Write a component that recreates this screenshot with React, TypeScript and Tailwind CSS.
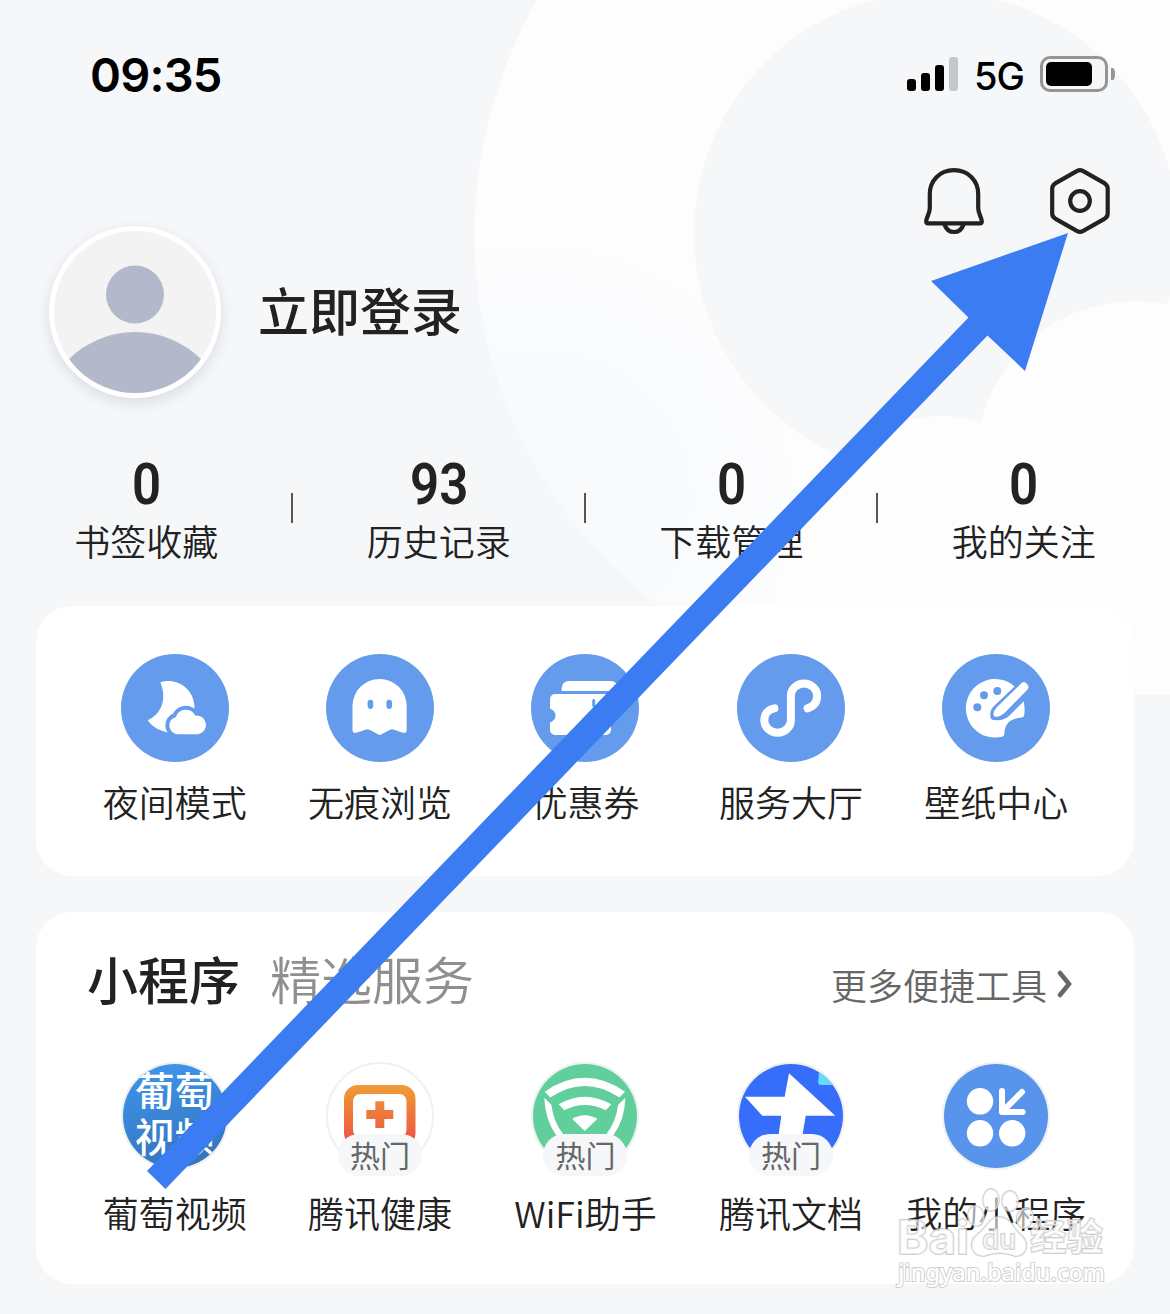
import React from 'react';

const stats = [
  { value: '0', label: '书签收藏' },
  { value: '93', label: '历史记录' },
  { value: '0', label: '下载管理' },
  { value: '0', label: '我的关注' },
];

const NightIcon = () => (
  <svg viewBox="0 0 108 108" className="size-[108px]">
    <path
      d="M39.300 28.200C55 23.500 73.500 34 73.500 54C73.500 66 60 82 44.500 78C37 76 30.500 72 26.700 66.300C40 60 46.500 46 39.300 28.200Z"
      fill="#fff"
    />
    <path
      d="M56.500 80.200a8.800 8.800 0 0 1-1.600-17.300a10.500 10.500 0 0 1 19.500-1.200a9.300 9.300 0 1 1 2.600 18.500z"
      fill="#fff"
      stroke="#649bec"
      strokeWidth="8"
    />
    <path
      d="M56.500 80.200a8.800 8.800 0 0 1-1.600-17.300a10.500 10.500 0 0 1 19.500-1.200a9.300 9.300 0 1 1 2.600 18.500z"
      fill="#fff"
    />
  </svg>
);

const GhostIcon = () => (
  <svg viewBox="0 0 108 108" className="size-[108px]">
    <path
      d="M26.500 52a27.100 27.100 0 0 1 54.200 0V76q0 3.500-4 2.700L67.500 75.500Q65.500 74.800 63.500 76L55.500 80.300Q53.700 81.500 52 80.300L44 76Q42 74.800 40 75.500L30.500 78.700Q26.500 79.500 26.500 76z"
      fill="#fff"
    />
    <rect x="41.600" y="45.700" width="5.600" height="9.200" rx="2.800" fill="#649bec" />
    <rect x="60.400" y="45.700" width="5.600" height="9.200" rx="2.800" fill="#649bec" />
  </svg>
);

const CouponIcon = () => (
  <svg viewBox="0 0 108 108" className="size-[108px]">
    <path d="M30.700 37V34a7 7 0 0 1 7-7H80a7 7 0 0 1 7 7v3z" fill="#fff" />
    <path
      d="M24 40H83a5 5 0 0 1 5 5v9.500a7 7 0 0 0-8 6.500V76a5 5 0 0 1-5 5H24a5 5 0 0 1-5-5V68.500q5.500-2.500 5.500-7T19 54.500V45a5 5 0 0 1 5-5z"
      fill="#fff"
    />
    <path d="M62.700 46.500v4.500q0 2 3 1.500" fill="none" stroke="#649bec" strokeWidth="3" strokeLinecap="round" />
  </svg>
);

const ServiceIcon = () => (
  <svg viewBox="0 0 108 108" className="size-[108px]">
    <path
      d="M37.400 54.400C31 55.500 27.300 60 27.300 66.200a13.300 12.500 0 0 0 26.600 0V42a13.100 12.500 0 0 1 26.200 0C80.100 48 76.500 52.500 70.500 54.400"
      fill="none"
      stroke="#fff"
      strokeWidth="8"
      strokeLinecap="round"
    />
  </svg>
);

const PaletteIcon = () => (
  <svg viewBox="0 0 108 108" className="size-[108px]">
    <path
      d="M80.500 43.500C82.500 49 83 55 82.300 60.500Q81.800 63.800 78.500 63.800C69 64 62.600 70 62.500 78.500Q62.600 82 60 82.800A29.300 29.300 0 1 1 71.500 31.500z"
      fill="#fff"
    />
    <circle cx="35.300" cy="53.300" r="4" fill="#649bec" />
    <circle cx="42" cy="41.300" r="4" fill="#649bec" />
    <circle cx="55.300" cy="37" r="4" fill="#649bec" />
    <path d="M79 26.500L91 38L67 62Q62 67 52 66Q48 66 48.300 61Q48 56 52 52z" fill="#649bec" />
    <path
      d="M79.500 29Q82 27 84.500 29.500L85.700 30.800Q87.500 33.500 85.300 35.700L63.500 58Q58 63.500 53.500 62.700Q51.200 62.700 51.500 60Q51.500 56.500 55 53z"
      fill="#fff"
    />
  </svg>
);

const GrapeIcon = () => (
  <div className="size-full bg-linear-165 from-[#4096ee] to-[#3172b8] pt-[2px] pl-[12px] text-[40px] leading-[46px] font-medium whitespace-nowrap text-white">
    <div>葡萄</div>
    <div>视频</div>
  </div>
);

const HealthIcon = () => (
  <svg viewBox="0 0 104 104" className="size-full">
    <defs>
      <linearGradient id="health" x1="0" y1="21" x2="0" y2="76" gradientUnits="userSpaceOnUse">
        <stop offset="0" stopColor="#f09c36" />
        <stop offset="1" stopColor="#ec5642" />
      </linearGradient>
    </defs>
    <path
      fillRule="evenodd"
      d="M30 21H73.500a14 14 0 0 1 14 14V69a14 14 0 0 1-14 14H30a14 14 0 0 1-14-14V35a14 14 0 0 1 14-14zM32 30a7 7 0 0 0-7 7V66a7 7 0 0 0 7 7H71.500a7 7 0 0 0 7-7V37a7 7 0 0 0-7-7z"
      fill="url(#health)"
    />
    <path d="M47.300 37.300h9V46h9v9h-9v9h-9v-9h-9v-9h9z" fill="url(#health)" />
  </svg>
);

const WifiIcon = () => (
  <svg viewBox="0 0 104 104" className="size-full bg-[#60cf9b]" fill="#fff">
    <path d="M11.700 27.700Q51.700 0 92 27.700L86.500 33.500Q51.700 10.500 17.300 33.500z" />
    <path d="M25.700 40.300Q51.700 25 78.300 40.300L72.700 46.300Q51.700 35.500 31.300 46.300z" />
    <path d="M39.300 55Q51.700 47.500 64.300 55L51.700 67z" />
    <path d="M11.300 33.700L18.500 41Q20 57 31 71.500L52 90L72.500 71.500Q83.500 57 85 41L92.300 33.700Q92 55 80.500 71L52 98L23 71Q12 55 11.300 33.700z" />
  </svg>
);

const DocsIcon = () => (
  <svg viewBox="0 0 104 104" className="size-full bg-[#366dfb]">
    <path d="M80.500 0H104V21H82Q79 21 79.200 18z" fill="#65dafc" />
    <path
      d="M50 9.300L96.300 51.700H66.700L63.300 72L61 84H38L39.700 70.300L42.300 51.700H23.300L6 32.700H45.700z"
      fill="#fff"
    />
  </svg>
);

const MineIcon = () => (
  <svg viewBox="0 0 104 104" className="size-full bg-[#5894eb]" fill="#fff">
    <circle cx="36" cy="37.300" r="13.200" />
    <circle cx="36" cy="69.300" r="13.200" />
    <circle cx="68.200" cy="69.300" r="13.200" />
    <path
      d="M58 27v21h20.500M78 28L59 47"
      fill="none"
      stroke="#fff"
      strokeWidth="6"
      strokeLinecap="round"
      strokeLinejoin="round"
    />
  </svg>
);

const tools = [
  { label: '夜间模式', Icon: NightIcon },
  { label: '无痕浏览', Icon: GhostIcon },
  { label: '优惠券', Icon: CouponIcon },
  { label: '服务大厅', Icon: ServiceIcon },
  { label: '壁纸中心', Icon: PaletteIcon },
];

const apps = [
  { label: '葡萄视频', Icon: GrapeIcon, hot: false },
  { label: '腾讯健康', Icon: HealthIcon, hot: true },
  { label: 'WiFi助手', Icon: WifiIcon, hot: true },
  { label: '腾讯文档', Icon: DocsIcon, hot: true },
  { label: '我的小程序', Icon: MineIcon, hot: false },
];

const Backdrop = () => (
  <svg className="absolute inset-0 -z-10" width="1170" height="1314" viewBox="0 0 1170 1314">
    <defs>
      <radialGradient id="ring" cx="540" cy="500" r="270" gradientUnits="userSpaceOnUse">
        <stop offset="0.400" stopColor="#f8fafc" />
        <stop offset="1" stopColor="#fdfdfe" />
      </radialGradient>
      <clipPath id="top">
        <rect width="1170" height="695" />
      </clipPath>
      <clipPath id="hole">
        <circle cx="936" cy="234" r="243" />
      </clipPath>
    </defs>
    <g clipPath="url(#top)">
      <circle cx="943" cy="234" r="468.500" fill="url(#ring)" />
      <circle cx="936" cy="234" r="242" fill="#f5f7f9" />
      <g clipPath="url(#hole)" fill="#fdfdfe">
        <circle cx="942" cy="557" r="141" />
        <circle cx="1135" cy="459.500" r="158.500" />
      </g>
      <rect x="1080" y="450" width="90" height="245" fill="#fdfdfe" />
    </g>
  </svg>
);

const StatusBar = () => (
  <div className="flex h-[150px] items-start justify-between pr-[55px] pl-[90px] text-black">
    <span className="mt-[51px] font-[Inter] text-[47px] leading-[48px] font-semibold tracking-[-0.8px]">09:35</span>
    <div className="mt-[56px] flex items-start">
      <div className="flex h-[35px] items-end gap-[5px]">
        <i className="h-[12px] w-[9px] rounded-[3px] bg-black" />
        <i className="h-[18px] w-[9px] rounded-[3px] bg-black" />
        <i className="h-[26px] w-[9px] rounded-[3px] bg-black" />
        <i className="h-[34px] w-[9px] rounded-[3px] bg-[#c5c7c9]" />
      </div>
      <span className="mt-px ml-[16px] w-[66px] font-[Inter] text-[38px] leading-[38px] font-medium tracking-[-1px]">5G</span>
      <div className="flex items-center">
        <div className="h-[36px] w-[68px] rounded-[10px] border-[3px] border-[#949597] p-[3px]">
          <div className="h-[24px] w-[46px] rounded-[5px] bg-black" />
        </div>
        <div className="ml-[3px] h-[12px] w-[4px] rounded-r-[100%] bg-[#949597]" />
      </div>
    </div>
  </div>
);

const Profile = () => (
  <div className="flex h-[250px] items-start justify-between pr-[58px] pl-[49px]">
    <div className="mt-[76px] flex items-center">
      <div className="size-[172px] overflow-hidden rounded-full border-[5px] border-white bg-[#f3f3f3] shadow-[0_5px_14px_rgba(40,50,80,0.13)]">
        <svg viewBox="0 0 162 162" className="size-full">
          <circle cx="81" cy="63.500" r="29" fill="#b3b8ca" />
          <circle cx="81" cy="195" r="94" fill="#b3b8ca" />
        </svg>
      </div>
      <span className="mb-[5px] ml-[37px] text-[51px] leading-none font-medium">立即登录</span>
    </div>
    <div className="mt-[16px] flex gap-[62px]">
      <svg viewBox="0 0 64 70" className="h-[70px] w-[64px]" fill="none" stroke="#222" strokeWidth="4.200">
        <path
          d="M32 4.200C17.500 4.200 7.800 15 7.800 28V42C7.800 48 4.200 51.500 4.200 55.500Q4.200 57.300 6.200 57.300H57.800Q59.800 57.300 59.800 55.500C59.800 51.500 56.200 48 56.200 42V28C56.200 15 46.500 4.200 32 4.200z"
          strokeLinejoin="round"
        />
        <path d="M22.500 58.500Q25 66 32 66T41.500 58.500" />
      </svg>
      <svg viewBox="0 0 64 70" className="h-[70px] w-[64px]" fill="none" stroke="#222" strokeWidth="4.200">
        <path d="M29.200 4.900Q32 3.400 34.800 4.900L56.800 17.400Q59.700 19.300 59.700 22.500V47.500Q59.700 50.700 56.800 52.600L34.800 65.100Q32 66.600 29.200 65.100L7.200 52.600Q4.200 50.700 4.200 47.500V22.500Q4.200 19.300 7.200 17.400z" />
        <circle cx="32" cy="35" r="9.800" />
      </svg>
    </div>
  </div>
);

const Stats = () => (
  <div className="grid h-[206px] grid-cols-4">
    {stats.map(({ value, label }, index) => (
      <div key={index} className="relative flex flex-col items-center pt-[54px]">
        <span className="scale-x-[0.88] font-[Roboto] text-[58px] leading-[60px] font-semibold">{value}</span>
        <span className="mt-[7px] text-[36px] leading-[38px] font-[350]">{label}</span>
        {index < 3 && <i className="absolute top-[93px] right-[-0.5px] h-[30px] w-[2px] bg-[#555]" />}
      </div>
    ))}
  </div>
);

const Tools = () => (
  <section className="mx-9 grid h-[270px] grid-cols-5 rounded-[36px] bg-white pt-12 pr-[35px] pl-9">
    {tools.map(({ label, Icon }) => (
      <div key={label} className="flex flex-col items-center">
        <div className="size-[108px] rounded-full bg-[#649bec]">
          <Icon />
        </div>
        <span className="mt-[20px] text-[36px] leading-[38px] font-[350]">{label}</span>
      </div>
    ))}
  </section>
);

const MiniApps = () => (
  <section className="mx-9 mt-9 h-[372px] rounded-[36px] bg-white pt-[39px] pr-[35px] pl-9">
    <div className="flex items-center pr-[26px] pl-[15px]">
      <h2 className="text-[51px] leading-[54px] font-medium">小程序</h2>
      <span className="ml-[30px] text-[51px] leading-[54px] font-[350] text-[#8f8f8f]">精选服务</span>
      <span className="mt-[12px] ml-auto text-[36px] leading-[38px] font-[350] text-[#666]">更多便捷工具</span>
      <svg viewBox="0 0 16 28" className="mt-[12px] ml-[10px] h-[28px] w-[16px]">
        <path d="M3 3L12 14L3 25" fill="none" stroke="#666" strokeWidth="4.500" strokeLinecap="round" />
      </svg>
    </div>
    <div className="mt-[57px] grid grid-cols-5">
      {apps.map(({ label, Icon, hot }) => (
        <div key={label} className="relative flex flex-col items-center">
          <div className="size-[108px] overflow-hidden rounded-full border-2 border-[#f0f0f0]">
            <Icon />
          </div>
          {hot && (
            <span className="absolute top-[72px] h-[42px] w-[84px] rounded-full bg-[#f5f7f9] text-center text-[30px] leading-[41px] text-[#666]">
              热门
            </span>
          )}
          <span className="mt-[23px] text-[36px] leading-[38px] font-[350] whitespace-nowrap">{label}</span>
        </div>
      ))}
    </div>
  </section>
);

const Watermark = () => (
  <svg className="absolute top-[1180px] left-[890px]" width="230" height="120" viewBox="0 0 230 120">
    <g fill="#fff" fillOpacity="0.600" stroke="#c4c4c4" strokeOpacity="0.800" strokeWidth="1.800" paintOrder="stroke">
      <ellipse cx="101" cy="20" rx="8" ry="11" />
      <ellipse cx="120" cy="21" rx="8" ry="10" />
      <ellipse cx="86" cy="36" rx="8" ry="10" transform="rotate(-12 86 36)" />
      <ellipse cx="135" cy="38" rx="8" ry="10" transform="rotate(15 135 38)" />
      <path d="M109 37C98 37 97 48 88 54C78 61 80 76 94 76Q103 73 110 73T125 76C138 76 140 62 130 54C122 47 121 37 109 37z" />
      <g fontFamily="Inter, 'Noto Sans CJK SC', sans-serif" fontWeight="700">
        <text x="7" y="74" fontSize="46" textLength="72" lengthAdjust="spacingAndGlyphs">
          Bai
        </text>
        <text x="92" y="69" fontSize="27" fontWeight="500" textLength="34" lengthAdjust="spacingAndGlyphs">
          du
        </text>
        <text x="140" y="71" fontSize="37" textLength="73" lengthAdjust="spacingAndGlyphs">
          经验
        </text>
      </g>
      <text
        x="8"
        y="101"
        fontSize="23"
        fontFamily="'Noto Sans', sans-serif"
        fontWeight="500"
        fillOpacity="1"
        strokeWidth="2"
        textLength="207"
        lengthAdjust="spacingAndGlyphs"
      >
        jingyan.baidu.com
      </text>
    </g>
  </svg>
);

const App = () => {
  return (
    <div className="relative isolate h-[1314px] w-[1170px] overflow-hidden bg-[#f5f7f9] font-['Noto_Sans_CJK_SC',sans-serif] text-[#222]">
      <Backdrop />
      <StatusBar />
      <Profile />
      <Stats />
      <Tools />
      <MiniApps />
      <svg className="absolute inset-0" width="1170" height="1314" viewBox="0 0 1170 1314">
        <path d="M1068 233L1025 371L987.500 335.500L165.500 1189L147 1171L968.500 317.500L931 281z" fill="#3c7cf2" />
      </svg>
      <Watermark />
    </div>
  );
};

export default App;
